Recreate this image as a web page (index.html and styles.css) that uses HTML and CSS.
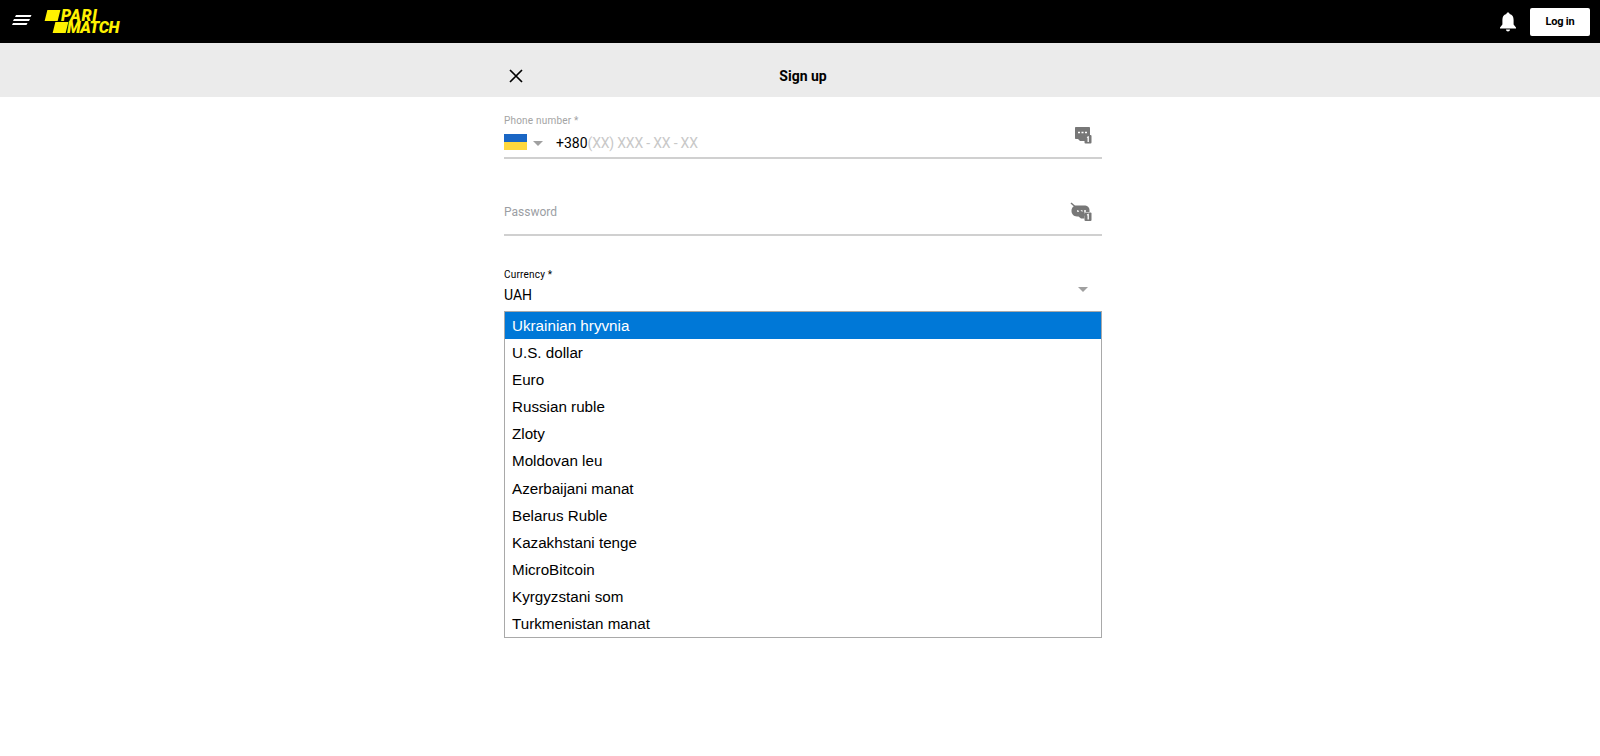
FILE: index.html
```html
<!DOCTYPE html>
<html lang="en">
<head>
    <meta charset="UTF-8">
    <title>Sign up</title>
    <link rel="stylesheet" href="styles.css">
</head>
<body>

    <header class="topbar">
        <div class="topbar-left">
            <svg class="burger" width="20" height="12" viewBox="0 0 20 12">
                <path d="M4 0H19.500L18.500 2H3ZM2 4H18L17 6H1ZM1 8H15.500L14.500 10H0Z" fill="#fff"/>
            </svg>
            <div class="logo">
                <span class="logo-row"><i class="logo-bar"></i><span class="logo-pari">PARI</span></span>
                <span class="logo-row logo-row-second"><i class="logo-bar"></i><span class="logo-match">MATCH</span></span>
            </div>
        </div>
        <div class="topbar-right">
            <svg class="bell" width="18" height="20" viewBox="0 0 18 20">
                <path d="M9 0.500C10 0.500 10.600 1.200 10.600 2.100C13.400 2.800 14.600 5 14.600 8V12.500L17 15.500V16.500H1V15.500L3.400 12.500V8C3.400 5 4.600 2.800 7.400 2.100C7.400 1.200 8 0.500 9 0.500ZM7 17.500H11C11 18.700 10.100 19.500 9 19.500C7.900 19.500 7 18.700 7 17.500Z" fill="#fff"/>
            </svg>
            <button class="login">Log in</button>
        </div>
    </header>

    <div class="titlebar">
        <div class="titlebar-inner">
            <svg class="close" width="16" height="16" viewBox="0 0 16 16">
                <path d="M2 2L14 14M14 2L2 14" stroke="#000" stroke-width="1.700" fill="none"/>
            </svg>
            <h1>Sign up</h1>
        </div>
    </div>

    <main class="form">
        <div class="field field-phone">
            <label class="field-label">Phone number *</label>
            <div class="field-row">
                <span class="flag"></span>
                <span class="arrow arrow-flag"></span>
                <span class="phone-code">+380</span><span class="phone-mask">(XX) XXX - XX - XX</span>
                <svg class="field-icon" width="18" height="18" viewBox="0 0 18 18">
                    <path d="M2 1H15C15.600 1 16 1.400 16 2V9H11V15H6L4 13H2C1.400 13 1 12.600 1 12V2C1 1.400 1.400 1 2 1Z" fill="#777"/>
                    <path d="M4 6.500H6M7.500 6.500H9.500M11 6.500H13" stroke="#fff" stroke-width="1.500"/>
                    <rect x="10.500" y="9" width="7" height="8.500" rx="1" fill="#777"/>
                    <path d="M13 11.500L14.200 11V16" stroke="#fff" stroke-width="1.300" fill="none"/>
                </svg>
            </div>
        </div>

        <div class="field field-password">
            <div class="field-row">
                <span class="password-label">Password</span>
                <svg class="field-icon" width="22" height="20" viewBox="0 0 22 20">
                    <path d="M7 3.500H14C17.500 3.500 19.500 5.500 19.500 8V10H14.500V16.500H11L8.500 14.500H7C3.500 14.500 1.500 11.500 1.500 9C1.500 5.500 3.500 3.500 7 3.500Z" fill="#777"/>
                    <path d="M7 9H9M10.500 9H12.500M14 9H16" stroke="#fff" stroke-width="1.500"/>
                    <path d="M1 1L17 15" stroke="#777" stroke-width="1.500"/>
                    <rect x="14.500" y="10.500" width="7" height="8.500" rx="1" fill="#777"/>
                    <path d="M17 13L18.200 12.500V17.500" stroke="#fff" stroke-width="1.300" fill="none"/>
                </svg>
            </div>
        </div>

        <div class="field field-currency">
            <label class="field-label field-label-dark">Currency *</label>
            <div class="field-row">
                <span class="currency-value">UAH</span>
                <span class="arrow arrow-currency"></span>
            </div>
            <ul class="dropdown">
                <li class="selected">Ukrainian hryvnia</li>
                <li>U.S. dollar</li>
                <li>Euro</li>
                <li>Russian ruble</li>
                <li>Zloty</li>
                <li>Moldovan leu</li>
                <li>Azerbaijani manat</li>
                <li>Belarus Ruble</li>
                <li>Kazakhstani tenge</li>
                <li>MicroBitcoin</li>
                <li>Kyrgyzstani som</li>
                <li>Turkmenistan manat</li>
            </ul>
        </div>
    </main>

</body>
</html>
```

FILE: styles.css
```css
body {
    font-family: Roboto, 'Liberation Sans', sans-serif;
    background: #fff;
    margin: 0;
    color: #000;
}
.topbar {
    height: 43px;
    background: #000;
    display: flex;
    align-items: center;
    justify-content: space-between;
    padding: 0 10px 0 12px;
}
.topbar-left, .topbar-right {
    display: flex;
    align-items: center;
}
.burger {
    margin-right: 14px;
    margin-top: -2px;
}
.logo {
    width: 76px;
    height: 24px;
    color: #fff200;
    font: italic 900 16px/12px Roboto, sans-serif;
}
.logo-row {
    display: flex;
    align-items: center;
    height: 12px;
}
.logo-row-second {
    padding-left: 8px;
}
.logo-bar {
    display: block;
    width: 13px;
    height: 11px;
    background: #fff200;
    transform: skewX(-14deg);
}
.logo-pari {
    margin-left: 2px;
    letter-spacing: 0.6px;
}
.logo-match {
    letter-spacing: -0.4px;
}
.bell {
    margin-right: 13px;
}
.login {
    width: 60px;
    height: 28px;
    background: #fff;
    border: 0;
    border-radius: 2px;
    font: 700 11px Roboto, sans-serif;
    letter-spacing: -0.2px;
    color: #000;
    padding: 0;
}
.titlebar {
    height: 54px;
    background: #ebebeb;
}
.titlebar-inner {
    width: 598px;
    padding-left: 6px;
    margin: 0 auto;
    height: 100%;
    position: relative;
    display: flex;
    align-items: center;
    justify-content: center;
}
.close {
    position: absolute;
    left: 10px;
    top: 25px;
}
.titlebar h1 {
    margin: 0;
    font-size: 14px;
    font-weight: 700;
    padding-top: 12px;
}
.form {
    width: 598px;
    padding-left: 6px;
    margin: 0 auto;
}
.field {
    border-bottom: 2px solid #d0d0d0;
}
.field-phone {
    height: 62px;
    padding-top: 18px;
    box-sizing: border-box;
}
.field-label {
    display: block;
    font-size: 10px;
    line-height: 12px;
    color: #a3a3a3;
    letter-spacing: 0.2px;
}
.field-label-dark {
    color: #000;
}
.field-row {
    display: flex;
    align-items: center;
    position: relative;
}
.field-phone .field-row {
    height: 24px;
    margin-top: 4px;
}
.flag {
    width: 23px;
    height: 16px;
    margin-top: -2px;
    background: linear-gradient(#1a66c4 50%, #ffd83d 50%);
    margin-right: 6px;
}
.arrow {
    width: 0;
    height: 0;
    border-left: 5px solid transparent;
    border-right: 5px solid transparent;
    border-top: 5px solid #a0a0a0;
}
.arrow-flag {
    margin-right: 13px;
}
.phone-code {
    font-size: 14px;
}
.phone-mask {
    font-size: 14px;
    letter-spacing: -0.2px;
    color: #c8c8c8;
}
.field-icon {
    position: absolute;
    right: 10px;
    top: -5px;
}
.field-password {
    height: 77px;
    box-sizing: border-box;
    padding-top: 43px;
}
.password-label {
    font-size: 12px;
    color: #9b9ea3;
    line-height: 20px;
}
.field-password .field-icon {
    right: 10px;
    top: 0;
}
.field-currency {
    border-bottom: 0;
    padding-top: 33px;
}
.field-currency .field-row {
    height: 24px;
    margin-top: 2px;
}
.currency-value {
    font-size: 14px;
}
.arrow-currency {
    position: absolute;
    right: 14px;
    top: 4px;
}
.dropdown {
    list-style: none;
    margin: 4px 0 0;
    padding: 0;
    border: 1px solid #a9a9a9;
    width: 598px;
    box-sizing: border-box;
    font-family: 'Liberation Sans', Arial, sans-serif;
    font-size: 15.200px;
}
.dropdown li {
    height: 27.100px;
    line-height: 27px;
    padding-left: 7px;
}
.dropdown .selected {
    background: #0078d7;
    color: #fff;
}
```
